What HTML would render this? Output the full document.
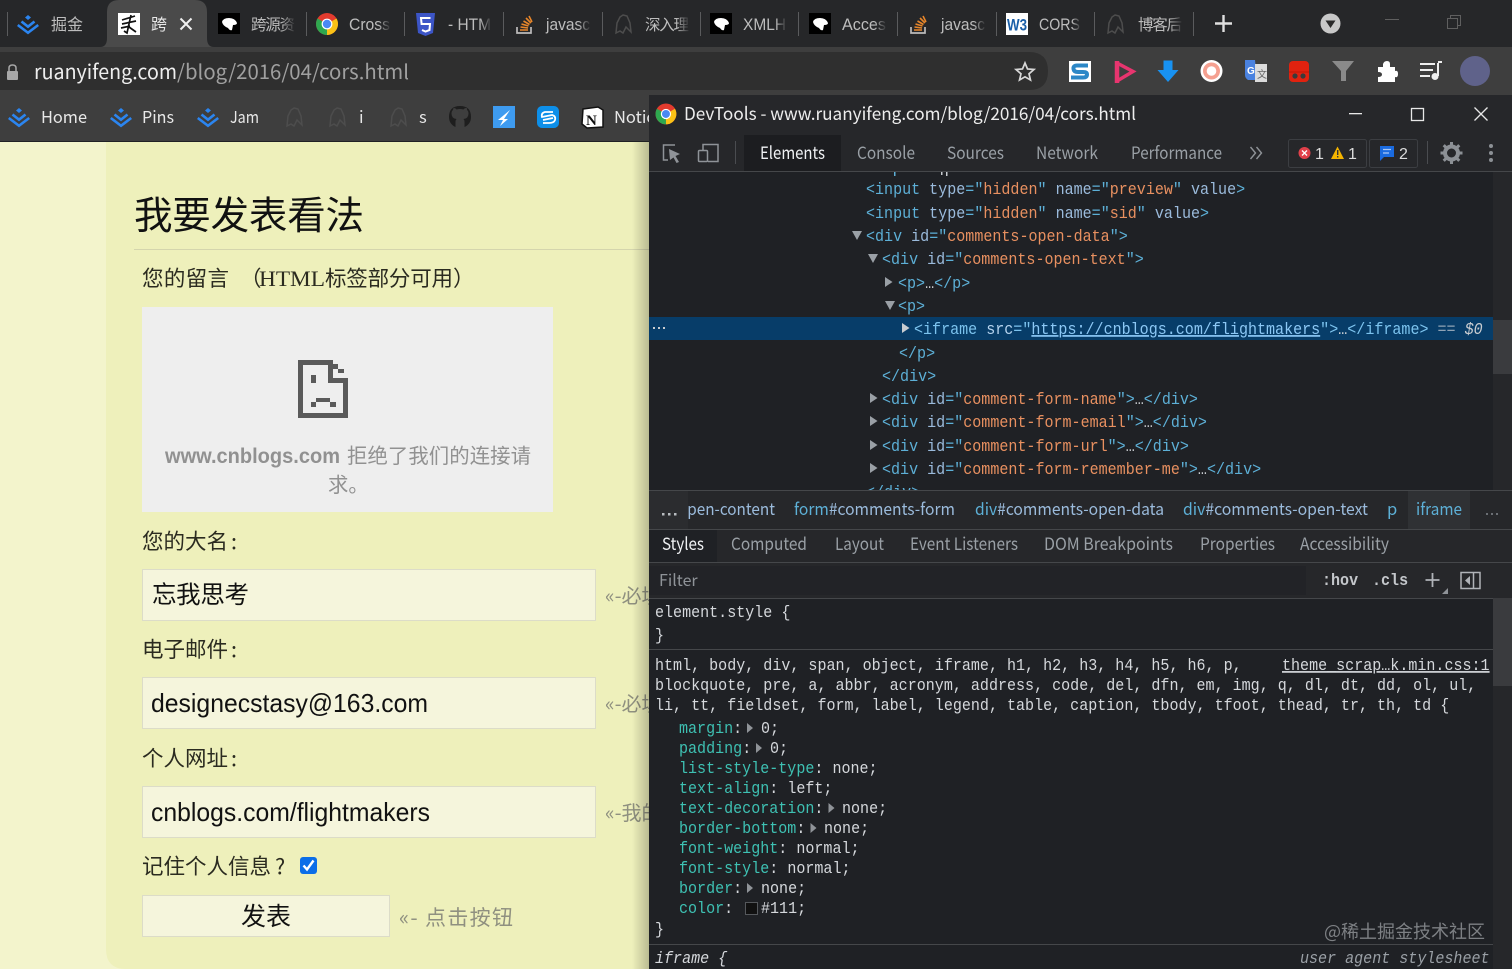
<!DOCTYPE html>
<html><head><meta charset="utf-8"><title>CORS</title>
<style>
html,body{margin:0;padding:0;width:1512px;height:969px;overflow:hidden;background:#202124}
svg{display:block;position:absolute;left:0;top:0}
text{white-space:pre}
.u{font-family:"Liberation Sans","Noto Sans CJK SC",sans-serif}
.c{font-family:"Noto Sans CJK SC","Liberation Sans",sans-serif}
.s{font-family:"Liberation Serif","Noto Sans CJK SC",serif}
.m{font-family:"Liberation Mono","Noto Sans CJK SC",monospace;font-size:17px}
.tag{fill:#5db0d7}.an{fill:#9bbbdc}.av{fill:#e89060}.tx{fill:#c8ccd0}
.pn{fill:#3ec1b3}.sl{fill:#d5d8dc}
.tab{font-size:17px;fill:#bdbdbd}
.tc{font-size:15.5px;fill:#bdbdbd}
.dt{font-size:17px;fill:#9aa0a6}
</style></head><body>
<svg width="1512" height="969" viewBox="0 0 1512 969" xmlns="http://www.w3.org/2000/svg">
<defs>
<linearGradient id="fd"><stop offset="0" stop-color="#262729" stop-opacity="0"/><stop offset="1" stop-color="#262729"/></linearGradient>
<linearGradient id="fa"><stop offset="0" stop-color="#4a4a4a" stop-opacity="0"/><stop offset="1" stop-color="#4a4a4a"/></linearGradient>
<linearGradient id="sh"><stop offset="0" stop-color="#000" stop-opacity="0"/><stop offset="1" stop-color="#000" stop-opacity=".22"/></linearGradient>
<g id="jj"><path d="M11 0 14 2.500 11 5 8 2.500Z" fill="#2b85f0"/><path d="M4.500 6.500 11 11.700 17.500 6.500M.8 10 11 17.800 21.200 10" fill="none" stroke="#2b85f0" stroke-width="2.600"/></g>
<g id="paw"><rect width="22" height="21" fill="#000"/><path d="M4 9Q5 5 11 5 17 5 19 10 19 12 15 12L14 17Q12 18 10 15 5 13 4 9Z" fill="#fff"/></g>
<g id="gh"><path d="M9 1 13 2 16 9 17 18 12 13 9 19 6 17 2 19 3 9 6 3Z" fill="none" stroke="#4d4d4d" stroke-width="1.500"/></g>
<g id="so"><path d="M1 12V18H15V12" fill="none" stroke="#bcbbbb" stroke-width="1.700"/><path d="M4 15H12M4.500 12 12 13M5.500 9 12.500 11M7.500 6 13.500 9.500M10 3 15 8M13 1 16 7" stroke="#e8862a" stroke-width="1.600" fill="none"/></g>
<g id="cr"><circle cx="11" cy="11" r="11" fill="#e33b2e"/><path d="M11 11 20.500 5.500A11 11 0 0 1 11 22Z" fill="#fbc116"/><path d="M11 11 11 22A11 11 0 0 1 1.500 5.500Z" fill="#2ea84f"/><circle cx="11" cy="11" r="5.400" fill="#fff"/><circle cx="11" cy="11" r="4.200" fill="#4a89f3"/></g>
</defs>

<!-- page background -->
<rect y="142" width="650" height="827" fill="#f3f4cc"/>
<path d="M106 142H650V969H126Q106 969 106 949Z" fill="#eef0bb"/>
<text class="c" x="134" y="229" font-size="38.500" fill="#111" textLength="230">我要发表看法</text>
<rect x="134" y="249" width="516" height="1" fill="#d4d5ad"/>
<text class="c" x="142" y="286" font-size="21.500" fill="#2b2b20" textLength="87">您的留言</text>
<text class="c" x="240" y="286" font-size="21.500" fill="#2b2b20">（</text>
<text class="s" x="259" y="286" font-size="22" fill="#2b2b20" textLength="66" lengthAdjust="spacingAndGlyphs">HTML</text>
<text class="c" x="325" y="286" font-size="21.500" fill="#2b2b20" textLength="128">标签部分可用</text>
<text class="c" x="453" y="286" font-size="21.500" fill="#2b2b20">）</text>

<rect x="142" y="307" width="411" height="205" fill="#eeeeee"/>
<g fill="#5a5a5a">
<rect x="298" y="360" width="35" height="5"/>
<rect x="298" y="360" width="5" height="58"/>
<rect x="298" y="413" width="50" height="5"/>
<rect x="343" y="378" width="5" height="40"/>
<rect x="328" y="360" width="5" height="23"/>
<rect x="328" y="378" width="20" height="5"/>
<rect x="333" y="364" width="5" height="5"/>
<rect x="338" y="369" width="6" height="4"/>
<rect x="311" y="375" width="5" height="8"/>
<rect x="316" y="398" width="14" height="4"/>
<rect x="311" y="402" width="5" height="5"/>
<rect x="330" y="402" width="6" height="5"/>
</g>
<text class="u" x="165" y="463" font-size="21.500" font-weight="700" fill="#919191" textLength="175" lengthAdjust="spacingAndGlyphs">www.cnblogs.com</text>
<text class="c" x="347" y="463" font-size="20.400" fill="#919191" textLength="184">拒绝了我们的连接请</text>
<text class="c" x="328" y="492" font-size="20.400" fill="#919191">求。</text>

<text class="c" x="142" y="549" font-size="21.500" fill="#2b2b20" textLength="86">您的大名</text>
<text class="c" x="231" y="549" font-size="21.500" fill="#2b2b20">:</text>
<rect x="142.500" y="569.500" width="453" height="51" fill="#f5f5dc" stroke="#dcdcc8"/>
<text class="c" x="152" y="603" font-size="24.500" fill="#111" textLength="97">忘我思考</text>
<text class="c" x="605" y="603" font-size="20" fill="#8f9080">«-必填</text>

<text class="c" x="142" y="657" font-size="21.500" fill="#2b2b20" textLength="86">电子邮件</text>
<text class="c" x="231" y="657" font-size="21.500" fill="#2b2b20">:</text>
<rect x="142.500" y="677.500" width="453" height="51" fill="#f5f5dc" stroke="#dcdcc8"/>
<text class="u" x="151" y="712" font-size="26" fill="#111" textLength="277" lengthAdjust="spacingAndGlyphs">designecstasy@163.com</text>
<text class="c" x="605" y="711" font-size="20" fill="#8f9080">«-必填</text>

<text class="c" x="142" y="766" font-size="21.500" fill="#2b2b20" textLength="86">个人网址</text>
<text class="c" x="231" y="766" font-size="21.500" fill="#2b2b20">:</text>
<rect x="142.500" y="786.500" width="453" height="51" fill="#f5f5dc" stroke="#dcdcc8"/>
<text class="u" x="151" y="821" font-size="26" fill="#111" textLength="279" lengthAdjust="spacingAndGlyphs">cnblogs.com/flightmakers</text>
<text class="c" x="605" y="820" font-size="20" fill="#8f9080">«-我的</text>

<text class="c" x="142" y="874" font-size="21.500" fill="#2b2b20" textLength="129">记住个人信息</text>
<text class="c" x="275" y="874" font-size="21.500" fill="#2b2b20">?</text>
<rect x="300" y="857" width="17" height="17" rx="3" fill="#0b6ee8"/>
<path d="M303.500 865.500 307 869.500 313.500 860.500" fill="none" stroke="#fff" stroke-width="2.400"/>
<rect x="142.500" y="895.500" width="247" height="41" fill="#f5f5dc" stroke="#dcdcc8"/>
<text class="c" x="241" y="925" font-size="25" fill="#111">发表</text>
<text class="c" x="399" y="925" font-size="21" fill="#8f9080" textLength="114">«- 点击按钮</text>
<rect x="632" y="142" width="17" height="827" fill="url(#sh)"/>

<!-- tab strip -->
<rect width="1512" height="47" fill="#262729"/>
<rect y="47" width="1512" height="94" fill="#3e3e3e"/>
<path d="M100 47Q107 47 107 38V12Q107 0 119 0H195Q207 0 207 12V38Q207 47 214 47Z" fill="#4a4a4a"/>
<g fill="#5a5b5d">
<rect x="7" y="12" width="1" height="24"/><rect x="306" y="12" width="1" height="24"/><rect x="404" y="12" width="1" height="24"/><rect x="503" y="12" width="1" height="24"/><rect x="602" y="12" width="1" height="24"/><rect x="700" y="12" width="1" height="24"/><rect x="798" y="12" width="1" height="24"/><rect x="897" y="12" width="1" height="24"/><rect x="996" y="12" width="1" height="24"/><rect x="1094" y="12" width="1" height="24"/><rect x="1193" y="12" width="1" height="24"/>
</g>
<use href="#jj" x="17" y="15"/>
<text class="c" x="51" y="30" font-size="16" fill="#bdbdbd">掘金</text>
<rect x="118" y="13" width="22" height="22" fill="#fff"/>
<path d="M122 20 135 16M122 24 136 21M121 28 130 26M131 15 127 33 124 31M129 27 136 32" stroke="#111" stroke-width="1.700" fill="none"/>
<text class="c" x="151" y="30" font-size="16" fill="#e8e8e8">跨</text>
<path d="M180.500 18.500 191.500 29.500M191.500 18.500 180.500 29.500" stroke="#f0f0f0" stroke-width="2"/>
<use href="#paw" x="218" y="13"/>
<text class="c tc" x="251" y="30" textLength="44">跨源资</text>
<rect x="281" y="10" width="15" height="28" fill="url(#fd)"/>
<use href="#cr" x="316" y="13"/>
<text class="u tab" x="349" y="30" textLength="41" lengthAdjust="spacingAndGlyphs">Cross</text>
<rect x="378" y="10" width="13" height="28" fill="url(#fd)"/>
<path d="M416 13H435L433 33 425.500 36 418 33Z" fill="#3c55c7"/><path d="M430.500 18H421L421.600 24H430L429.500 30 425.500 31.500 422 30" fill="none" stroke="#fff" stroke-width="2"/>
<text class="u tab" x="448" y="30" textLength="43" lengthAdjust="spacingAndGlyphs">- HTM</text>
<rect x="480" y="10" width="12" height="28" fill="url(#fd)"/>
<use href="#so" x="516" y="15"/>
<text class="u tab" x="546" y="30" textLength="44" lengthAdjust="spacingAndGlyphs">javasc</text>
<rect x="578" y="10" width="13" height="28" fill="url(#fd)"/>
<use href="#gh" x="614" y="14"/>
<text class="c tc" x="645" y="30" textLength="44">深入理</text>
<rect x="676" y="10" width="14" height="28" fill="url(#fd)"/>
<use href="#paw" x="710" y="13"/>
<text class="u tab" x="743" y="30" textLength="43" lengthAdjust="spacingAndGlyphs">XMLH</text>
<rect x="775" y="10" width="12" height="28" fill="url(#fd)"/>
<use href="#paw" x="809" y="13"/>
<text class="u tab" x="842" y="30" textLength="44" lengthAdjust="spacingAndGlyphs">Acces</text>
<rect x="874" y="10" width="13" height="28" fill="url(#fd)"/>
<use href="#so" x="910" y="15"/>
<text class="u tab" x="941" y="30" textLength="44" lengthAdjust="spacingAndGlyphs">javasc</text>
<rect x="973" y="10" width="13" height="28" fill="url(#fd)"/>
<rect x="1006" y="13" width="22" height="22" fill="#fff"/>
<text class="u" x="1007" y="30.500" font-size="17" font-weight="700" fill="#1a5fa8" textLength="20" lengthAdjust="spacingAndGlyphs">W3</text>
<text class="u tab" x="1039" y="30" textLength="41" lengthAdjust="spacingAndGlyphs">CORS</text>
<rect x="1072" y="10" width="9" height="28" fill="url(#fd)"/>
<use href="#gh" x="1106" y="14"/>
<text class="c tc" x="1138" y="30" textLength="44">博客后</text>
<rect x="1169" y="10" width="14" height="28" fill="url(#fd)"/>
<path d="M1223.500 15V32M1215 23.500H1232" stroke="#e0e0e0" stroke-width="2.400"/>
<circle cx="1330.500" cy="23.500" r="10" fill="#c8c8c8"/><path d="M1325.500 20.500H1335.500L1330.500 28Z" fill="#2a2a2a"/>
<rect x="1385" y="19" width="14" height="1" fill="#5f5f5f"/>
<path d="M1447.500 18.500H1457.500V28.500H1447.500ZM1450.500 18.500V15.500H1460.500V25.500H1457.500" fill="none" stroke="#5f5f5f"/>

<!-- omnibox -->
<path d="M0 52H1029Q1048 52 1048 71T1029 90H0Z" fill="#2f2f2f"/>
<rect x="7" y="71" width="11" height="9" rx="1" fill="#a8a8a8"/><path d="M9 71V68Q9 65 12.500 65T16 68V71" fill="none" stroke="#a8a8a8" stroke-width="1.500"/>
<text class="c" x="34" y="79" font-size="20" fill="#eeeeee" textLength="143" lengthAdjust="spacingAndGlyphs">ruanyifeng.com</text>
<text class="c" x="177" y="79" font-size="20" fill="#a0a0a0" textLength="232" lengthAdjust="spacingAndGlyphs">/blog/2016/04/cors.html</text>
<path d="M1025 63 1027.500 69 1034 69.500 1029 73.800 1030.500 80 1025 76.800 1019.500 80 1021 73.800 1016 69.500 1022.500 69Z" fill="none" stroke="#d8d8d8" stroke-width="1.700"/>

<!-- extensions -->
<rect x="1069" y="61" width="22" height="21" fill="#fff"/>
<path d="M1088 65.500H1077Q1073 65.500 1073.500 69 1074 72 1078 72H1083Q1087 72 1087 74.500 1087 77.500 1083 77.500H1071" fill="none" stroke="#2b87c7" stroke-width="4"/>
<path d="M1117 63 1133 71.500 1117 81" fill="none" stroke="#e8356f" stroke-width="3.500"/><path d="M1117 61V83" stroke="#e8356f" stroke-width="4.500"/>
<path d="M1163.500 60.500H1172.500V70H1178.500L1168 82 1157.500 70H1163.500Z" fill="#1892f2"/>
<circle cx="1211.500" cy="71" r="11" fill="#fff"/><circle cx="1211.500" cy="71" r="8.500" fill="#f5a090"/><circle cx="1211.500" cy="71" r="4.800" fill="#fff"/>
<path d="M1245 60H1255L1257 80H1248Q1245 78 1245 75Z" fill="#4a82e0"/>
<rect x="1255" y="64" width="12" height="18" fill="#dcdcdc"/>
<text class="u" x="1247" y="74" font-size="10" font-weight="700" fill="#fff">G</text>
<text class="c" x="1257" y="78" font-size="10" fill="#666">文</text>
<rect x="1289" y="61" width="20" height="21" rx="4" fill="#e1220f"/><path d="M1289 72H1309" stroke="#c21706"/><circle cx="1295" cy="76" r="2.600" fill="#3a3a3a"/><circle cx="1303" cy="76" r="2.600" fill="#3a3a3a"/>
<path d="M1332 61H1354L1346 71V81L1341 81V71Z" fill="#8a8a8a"/>
<path d="M1378 67H1383V64Q1384 61 1387 61T1390 64V67H1395V71Q1398 70 1398 74T1395 77V82H1378V77Q1382 77 1382 74.500T1378 72Z" fill="#fff"/>
<path d="M1420 64H1435M1420 70H1433M1420 76H1430" stroke="#eee" stroke-width="2"/><path d="M1438 63V76" stroke="#eee" stroke-width="2"/><path d="M1438 62H1442" stroke="#eee" stroke-width="2"/><circle cx="1435" cy="76.500" r="3.500" fill="#eee"/>
<circle cx="1475" cy="71" r="15" fill="#5f628a"/>

<!-- bookmark bar -->
<use href="#jj" x="8" y="108"/>
<text class="c" x="41" y="123" font-size="16.500" fill="#e8e8e8" textLength="46" lengthAdjust="spacingAndGlyphs">Home</text>
<use href="#jj" x="110" y="108"/>
<text class="c" x="142" y="123" font-size="16.500" fill="#e8e8e8" textLength="32" lengthAdjust="spacingAndGlyphs">Pins</text>
<use href="#jj" x="197" y="108"/>
<text class="c" x="230" y="123" font-size="16.500" fill="#e8e8e8" textLength="29" lengthAdjust="spacingAndGlyphs">Jam</text>
<use href="#gh" x="285" y="107"/><use href="#gh" x="328" y="107"/>
<text class="c" x="359" y="123" font-size="16.500" fill="#e8e8e8">i</text>
<use href="#gh" x="389" y="107"/>
<text class="c" x="419" y="123" font-size="16.500" fill="#e8e8e8">s</text>
<path d="M460 106Q471 106 471 117 471 124 464.500 127V122Q464.500 120 463.500 119 468.500 118.500 468.500 113.500 468.500 111 467 110 467 108 466.500 108 464.500 108 463.500 109.500 460 108.500 456.500 109.500 455.500 108 453.500 108 453 110 453 110 451.500 111 451.500 113.500 451.500 118.500 456.500 119 455.500 120 455.500 122V127Q449 124 449 117 449 106 460 106Z" fill="#1e1e1e"/>
<rect x="493" y="106" width="22" height="22" fill="#3e9bf0"/><path d="M510 110 498 120 503 120 500 126 508 119 504 119Z" fill="#fff"/>
<rect x="537" y="106" width="22" height="22" rx="5" fill="#0d8fe9"/><path d="M553 112H545Q541 113 542 117L552 115Q556 116 555 120 554 123 549 123H543M543 120 553 118" fill="none" stroke="#fff" stroke-width="1.800"/>
<path d="M583 109 598 107 603 110V127L587 128 582 124Z" fill="#fff" stroke="#111" stroke-width="1.500"/>
<text class="s" x="586" y="125" font-size="15" font-weight="700" fill="#111">N</text>
<text class="c" x="614" y="123" font-size="16.500" fill="#e8e8e8">Notion</text>

<!-- devtools -->
<rect x="649" y="95" width="863" height="874" fill="#1f2125"/>
<rect x="649" y="95" width="863" height="76" fill="#26272a"/>
<rect x="649" y="171" width="863" height="1" fill="#45474a"/>
<use href="#cr" transform="translate(655.500 103.500) scale(.95)"/>
<text class="c" x="684" y="120" font-size="17.500" fill="#ededed" textLength="452" lengthAdjust="spacingAndGlyphs">DevTools - www.ruanyifeng.com/blog/2016/04/cors.html</text>
<rect x="1349" y="113" width="13" height="1.300" fill="#e8e8e8"/>
<rect x="1411.500" y="108.500" width="12" height="12" fill="none" stroke="#e8e8e8" stroke-width="1.300"/>
<path d="M1474.500 107.500 1487.500 120.500M1487.500 107.500 1474.500 120.500" stroke="#e8e8e8" stroke-width="1.300"/>

<rect x="744" y="135" width="97" height="36" fill="#1c1d20"/>
<path d="M675 145H663.500V160H668" fill="none" stroke="#8f9398" stroke-width="1.500"/>
<path d="M669 149 680 154 675.500 156 679 162 676.500 163 673.500 157.500 670 160Z" fill="#8f9398"/>
<rect x="698.500" y="150.500" width="9" height="11" rx="1" fill="none" stroke="#8f9398" stroke-width="1.500"/>
<path d="M703 150V144.500H718V161.500H708" fill="none" stroke="#8f9398" stroke-width="1.500"/>
<rect x="735" y="141" width="1" height="23" fill="#4a4c50"/>
<text class="c dt" x="760" y="159" style="fill:#f0f2f4" textLength="65" lengthAdjust="spacingAndGlyphs">Elements</text>
<text class="c dt" x="857" y="159" textLength="58" lengthAdjust="spacingAndGlyphs">Console</text>
<text class="c dt" x="947" y="159" textLength="57" lengthAdjust="spacingAndGlyphs">Sources</text>
<text class="c dt" x="1036" y="159" textLength="62" lengthAdjust="spacingAndGlyphs">Network</text>
<text class="c dt" x="1131" y="159" textLength="91" lengthAdjust="spacingAndGlyphs">Performance</text>
<path d="M1250.500 147 1255.500 153 1250.500 159M1256.500 147 1261.500 153 1256.500 159" fill="none" stroke="#8f9398" stroke-width="1.400"/>
<rect x="1288.500" y="139.500" width="78" height="28" rx="2" fill="none" stroke="#3c3e42"/>
<rect x="1369.500" y="139.500" width="48" height="28" rx="2" fill="none" stroke="#3c3e42"/>
<circle cx="1304.500" cy="153" r="6" fill="#e0404a"/><path d="M1302 150.500 1307 155.500M1307 150.500 1302 155.500" stroke="#fff" stroke-width="1.300"/>
<text class="u" x="1315" y="159" font-size="16" fill="#dcdcdc">1</text>
<path d="M1337.500 146.500 1344 159H1331Z" fill="#f4b400"/><rect x="1337" y="150" width="1.400" height="5" fill="#333"/><rect x="1337" y="156" width="1.400" height="1.500" fill="#333"/>
<text class="u" x="1348" y="159" font-size="16" fill="#dcdcdc">1</text>
<path d="M1380 146H1394V157H1384L1380 161Z" fill="#1a6be0"/><path d="M1383 149.500H1391M1383 153H1389" stroke="#aac8f5" stroke-width="1.300"/>
<text class="u" x="1399" y="159" font-size="16" fill="#dcdcdc">2</text>
<rect x="1427" y="141" width="1" height="23" fill="#4a4c50"/>
<circle cx="1451.500" cy="153" r="6.500" fill="none" stroke="#8c9095" stroke-width="4"/>
<path d="M1451.500 142V146M1451.500 160V164M1440.500 153H1444.500M1458.500 153H1462.500M1443.700 145.200 1446.500 148M1456.500 158 1459.300 160.800M1443.700 160.800 1446.500 158M1456.500 148 1459.300 145.200" stroke="#8c9095" stroke-width="3"/>
<circle cx="1491" cy="146" r="2" fill="#8c9095"/><circle cx="1491" cy="153" r="2" fill="#8c9095"/><circle cx="1491" cy="160" r="2" fill="#8c9095"/>

<!-- scrollbars -->
<rect x="1493" y="172" width="19" height="319" fill="#26272a"/>
<rect x="1493" y="320" width="19" height="54" fill="#3a3b3e"/>
<rect x="1493" y="598" width="19" height="371" fill="#26272a"/>
<rect x="1493" y="598" width="19" height="88" fill="#3a3b3e"/>

<!-- selected row -->
<rect x="649" y="317" width="844" height="23" fill="#073d69"/>
<rect x="653" y="327" width="2" height="2" fill="#c8ccd0"/><rect x="658" y="327" width="2" height="2" fill="#c8ccd0"/><rect x="663" y="327" width="2" height="2" fill="#c8ccd0"/>

<!-- DOM tree -->
<rect x="894" y="172" width="1.500" height="4" fill="#5db0d7"/><rect x="941" y="172" width="1.500" height="3" fill="#c8ccd0"/><rect x="946" y="172" width="1.500" height="4" fill="#c8ccd0"/>
<g class="m">
<text transform="translate(866 194) scale(.885 1)"><tspan class="tag">&lt;input</tspan><tspan class="an"> type</tspan><tspan class="tag">="</tspan><tspan class="av">hidden</tspan><tspan class="tag">"</tspan><tspan class="an"> name</tspan><tspan class="tag">="</tspan><tspan class="av">preview</tspan><tspan class="tag">"</tspan><tspan class="an"> value</tspan><tspan class="tag">&gt;</tspan></text>
<text transform="translate(866 218) scale(.885 1)"><tspan class="tag">&lt;input</tspan><tspan class="an"> type</tspan><tspan class="tag">="</tspan><tspan class="av">hidden</tspan><tspan class="tag">"</tspan><tspan class="an"> name</tspan><tspan class="tag">="</tspan><tspan class="av">sid</tspan><tspan class="tag">"</tspan><tspan class="an"> value</tspan><tspan class="tag">&gt;</tspan></text>
<text transform="translate(866 241) scale(.885 1)"><tspan class="tag">&lt;div</tspan><tspan class="an"> id</tspan><tspan class="tag">="</tspan><tspan class="av">comments-open-data</tspan><tspan class="tag">"&gt;</tspan></text>
<text transform="translate(882 264) scale(.885 1)"><tspan class="tag">&lt;div</tspan><tspan class="an"> id</tspan><tspan class="tag">="</tspan><tspan class="av">comments-open-text</tspan><tspan class="tag">"&gt;</tspan></text>
<text transform="translate(898 288) scale(.885 1)"><tspan class="tag">&lt;p&gt;</tspan><tspan class="tx">…</tspan><tspan class="tag">&lt;/p&gt;</tspan></text>
<text transform="translate(898 311) scale(.885 1)" class="tag">&lt;p&gt;</text>
<text transform="translate(914 334) scale(.885 1)" fill="#7cc3ee">&lt;iframe<tspan fill="#b5d3ee"> src</tspan>="<tspan fill="#8cc8f5" text-decoration="underline">https://cnblogs.com/flightmakers</tspan>"&gt;<tspan fill="#d5d8dc">…</tspan>&lt;/iframe&gt;<tspan fill="#8fa3b5"> == </tspan><tspan fill="#c8ccd0" font-style="italic">$0</tspan></text>
<text transform="translate(899 358) scale(.885 1)" class="tag">&lt;/p&gt;</text>
<text transform="translate(882 381) scale(.885 1)" class="tag">&lt;/div&gt;</text>
<text transform="translate(882 404) scale(.885 1)"><tspan class="tag">&lt;div</tspan><tspan class="an"> id</tspan><tspan class="tag">="</tspan><tspan class="av">comment-form-name</tspan><tspan class="tag">"&gt;</tspan><tspan class="tx">…</tspan><tspan class="tag">&lt;/div&gt;</tspan></text>
<text transform="translate(882 427) scale(.885 1)"><tspan class="tag">&lt;div</tspan><tspan class="an"> id</tspan><tspan class="tag">="</tspan><tspan class="av">comment-form-email</tspan><tspan class="tag">"&gt;</tspan><tspan class="tx">…</tspan><tspan class="tag">&lt;/div&gt;</tspan></text>
<text transform="translate(882 451) scale(.885 1)"><tspan class="tag">&lt;div</tspan><tspan class="an"> id</tspan><tspan class="tag">="</tspan><tspan class="av">comment-form-url</tspan><tspan class="tag">"&gt;</tspan><tspan class="tx">…</tspan><tspan class="tag">&lt;/div&gt;</tspan></text>
<text transform="translate(882 474) scale(.885 1)"><tspan class="tag">&lt;div</tspan><tspan class="an"> id</tspan><tspan class="tag">="</tspan><tspan class="av">comment-form-remember-me</tspan><tspan class="tag">"&gt;</tspan><tspan class="tx">…</tspan><tspan class="tag">&lt;/div&gt;</tspan></text>
<text transform="translate(866 497) scale(.885 1)" class="tag">&lt;/div&gt;</text>
</g>
<g fill="#9aa0a6">
<path d="M852 231H862L857 240Z"/><path d="M868 254H878L873 263Z"/><path d="M885 277 892.500 282 885 287Z"/><path d="M885 301H895L890 310Z"/><path d="M902 323 909.500 328 902 333Z" fill="#c8ccd0"/>
<path d="M870 393 877.500 398 870 403Z"/><path d="M870 416 877.500 421 870 426Z"/><path d="M870 440 877.500 445 870 450Z"/><path d="M870 463 877.500 468 870 473Z"/>
</g>

<!-- breadcrumb -->
<rect x="649" y="491" width="863" height="39" fill="#26272a"/>
<rect x="649" y="490" width="863" height="1" fill="#45474a"/>
<rect x="649" y="529" width="863" height="1" fill="#45474a"/>
<rect x="1408" y="491" width="62" height="38" fill="#2f3134"/>
<text class="c" x="678" y="515" font-size="16.500" fill="#9bbbdc" textLength="97" lengthAdjust="spacingAndGlyphs">open-content</text>
<rect x="649" y="491" width="39" height="38" fill="#2b2c2f"/>
<rect x="662" y="513" width="2.500" height="2.500" fill="#b8bcc0"/><rect x="668" y="513" width="2.500" height="2.500" fill="#b8bcc0"/><rect x="674" y="513" width="2.500" height="2.500" fill="#b8bcc0"/>
<text class="c" x="794" y="515" font-size="16.500" textLength="161" lengthAdjust="spacingAndGlyphs"><tspan fill="#5db0d7">form</tspan><tspan fill="#9bbbdc">#comments-form</tspan></text>
<text class="c" x="975" y="515" font-size="16.500" textLength="189" lengthAdjust="spacingAndGlyphs"><tspan fill="#5db0d7">div</tspan><tspan fill="#9bbbdc">#comments-open-data</tspan></text>
<text class="c" x="1183" y="515" font-size="16.500" textLength="185" lengthAdjust="spacingAndGlyphs"><tspan fill="#5db0d7">div</tspan><tspan fill="#9bbbdc">#comments-open-text</tspan></text>
<text class="c" x="1387" y="515" font-size="16.500" fill="#5db0d7">p</text>
<text class="c" x="1416" y="515" font-size="16.500" fill="#5db0d7" textLength="46" lengthAdjust="spacingAndGlyphs">iframe</text>
<rect x="1486" y="513" width="2" height="2" fill="#6b6f74"/><rect x="1491" y="513" width="2" height="2" fill="#6b6f74"/><rect x="1496" y="513" width="2" height="2" fill="#6b6f74"/>

<!-- sidebar tabs -->
<rect x="649" y="530" width="863" height="32" fill="#26272a"/>
<rect x="649" y="530" width="68" height="32" fill="#1f2125"/>
<text class="c dt" x="662" y="550" style="fill:#f0f2f4" textLength="42" lengthAdjust="spacingAndGlyphs">Styles</text>
<text class="c dt" x="731" y="550" textLength="76" lengthAdjust="spacingAndGlyphs">Computed</text>
<text class="c dt" x="835" y="550" textLength="49" lengthAdjust="spacingAndGlyphs">Layout</text>
<text class="c dt" x="910" y="550" textLength="108" lengthAdjust="spacingAndGlyphs">Event Listeners</text>
<text class="c dt" x="1044" y="550" textLength="129" lengthAdjust="spacingAndGlyphs">DOM Breakpoints</text>
<text class="c dt" x="1200" y="550" textLength="75" lengthAdjust="spacingAndGlyphs">Properties</text>
<text class="c dt" x="1300" y="550" textLength="89" lengthAdjust="spacingAndGlyphs">Accessibility</text>
<rect x="649" y="562" width="863" height="1" fill="#45474a"/>

<!-- filter -->
<rect x="649" y="563" width="863" height="35" fill="#26272a"/>
<rect x="649" y="566" width="657" height="29" fill="#222327"/>
<text class="c" x="659" y="586" font-size="16" fill="#8f9398">Filter</text>
<text class="m" transform="translate(1322 585) scale(.885 1)" font-weight="700" fill="#c4c7cb">:hov</text>
<text class="m" transform="translate(1372 585) scale(.885 1)" font-weight="700" fill="#c4c7cb">.cls</text>
<path d="M1432.500 573V587M1425.500 580H1439.500" stroke="#b0b3b8" stroke-width="1.800"/>
<path d="M1448 588V594H1442Z" fill="#8f9398"/>
<rect x="1461" y="572.500" width="19" height="16" fill="none" stroke="#b0b3b8" stroke-width="1.500"/><path d="M1473.500 572.500V588.500" stroke="#b0b3b8" stroke-width="1.500"/><path d="M1470 576V585L1465 580.500Z" fill="#b0b3b8"/>
<rect x="649" y="598" width="844" height="1" fill="#45474a"/>

<!-- styles -->
<g class="m sl">
<text transform="translate(655 617) scale(.885 1)">element.style {</text>
<text transform="translate(655 640) scale(.885 1)">}</text>
<text transform="translate(655 670) scale(.885 1)">html, body, div, span, object, iframe, h1, h2, h3, h4, h5, h6, p,</text>
<text transform="translate(655 690) scale(.885 1)">blockquote, pre, a, abbr, acronym, address, code, del, dfn, em, img, q, dl, dt, dd, ol, ul,</text>
<text transform="translate(655 710) scale(.885 1)">li, tt, fieldset, form, label, legend, table, caption, tbody, tfoot, thead, tr, th, td {</text>
<text transform="translate(1282 670) scale(.885 1)" text-decoration="underline">theme_scrap…k.min.css:1</text>
<text transform="translate(679 733) scale(.885 1)"><tspan class="pn">margin</tspan>:</text>
<text transform="translate(761 733) scale(.885 1)">0;</text>
<text transform="translate(679 753) scale(.885 1)"><tspan class="pn">padding</tspan>:</text>
<text transform="translate(770 753) scale(.885 1)">0;</text>
<text transform="translate(679 773) scale(.885 1)"><tspan class="pn">list-style-type</tspan>: none;</text>
<text transform="translate(679 793) scale(.885 1)"><tspan class="pn">text-align</tspan>: left;</text>
<text transform="translate(679 813) scale(.885 1)"><tspan class="pn">text-decoration</tspan>:</text>
<text transform="translate(842 813) scale(.885 1)">none;</text>
<text transform="translate(679 833) scale(.885 1)"><tspan class="pn">border-bottom</tspan>:</text>
<text transform="translate(824 833) scale(.885 1)">none;</text>
<text transform="translate(679 853) scale(.885 1)"><tspan class="pn">font-weight</tspan>: normal;</text>
<text transform="translate(679 873) scale(.885 1)"><tspan class="pn">font-style</tspan>: normal;</text>
<text transform="translate(679 893) scale(.885 1)"><tspan class="pn">border</tspan>:</text>
<text transform="translate(761 893) scale(.885 1)">none;</text>
<text transform="translate(679 913) scale(.885 1)"><tspan class="pn">color</tspan>:</text>
<text transform="translate(761 913) scale(.885 1)">#111;</text>
<text transform="translate(655 934) scale(.885 1)">}</text>
<text transform="translate(655 963) scale(.885 1)" font-style="italic">iframe {</text>
<text transform="translate(1300 963) scale(.885 1)" font-style="italic" fill="#9aa0a6">user agent stylesheet</text>
</g>
<g fill="#8f9398">
<path d="M747 723 753 728 747 733Z"/><path d="M756 743 762 748 756 753Z"/><path d="M828.500 803 834.500 808 828.500 813Z"/><path d="M810.500 823 816.500 828 810.500 833Z"/><path d="M747 883 753 888 747 893Z"/>
</g>
<rect x="745.500" y="902.500" width="12" height="12" fill="#111" stroke="#55585c"/>
<rect x="649" y="649" width="844" height="1" fill="#45474a"/>
<rect x="649" y="944" width="844" height="1" fill="#45474a"/>
<text class="c" x="1324" y="938" font-size="18" fill="#7d8084" textLength="161">@稀土掘金技术社区</text>
</svg>
</body></html>
